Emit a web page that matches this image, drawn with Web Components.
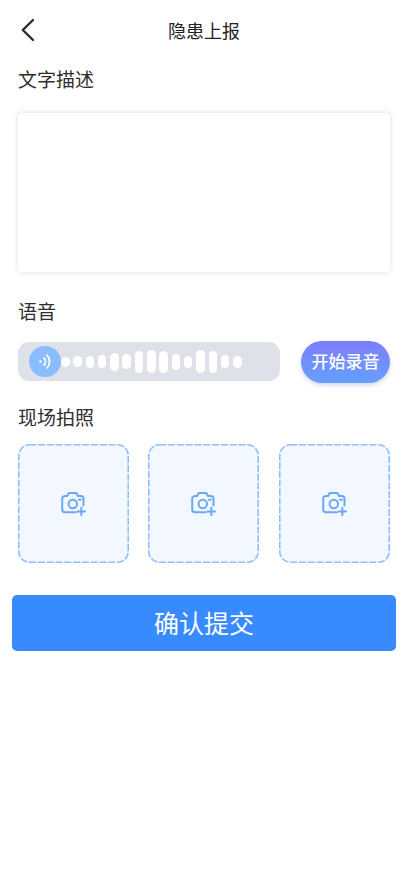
<!DOCTYPE html>
<html lang="zh"><head><meta charset="utf-8"><title>隐患上报</title>
<style>
html,body{margin:0;padding:0;background:#fff}
body{width:414px;height:896px;overflow:hidden;font-family:"Noto Sans CJK SC","Liberation Sans",sans-serif;color:#2b2b2b}
</style></head><body>
<report-page></report-page>
<script>
class TopBar extends HTMLElement{constructor(){super();this.attachShadow({mode:'open'}).innerHTML=`
<style>:host{display:flex;height:60px;box-sizing:border-box;padding:0 6px 1px 0;align-items:center;justify-content:center;position:relative;font-size:18px;color:#222}
svg{position:absolute;left:18px;top:15px}
</style><svg width="22" height="30" viewBox="0 0 22 30" fill="none" stroke="#2a2a2a" stroke-width="2.4" stroke-linecap="round" stroke-linejoin="round"><path d="M15 5 4.8 15 15 25"/></svg><span><slot></slot></span>`}}
class SecLabel extends HTMLElement{constructor(){super();this.attachShadow({mode:'open'}).innerHTML=`
<style>:host{display:block;font-size:19px;line-height:28px;color:#2e2e2e;padding-left:18px}</style><slot></slot>`}}
class TextBox extends HTMLElement{constructor(){super();this.attachShadow({mode:'open'}).innerHTML=`
<style>:host{display:block;margin:0 24px 0 18px;height:159px;background:#fff;border-radius:4px;box-shadow:0 0 6px rgba(0,0,0,.13)}</style>`}}
class VoiceBar extends HTMLElement{constructor(){super();const hs=[10,11,12,13,18,15,22,23,22,16,12,23,22,13,12];
this.attachShadow({mode:'open'}).innerHTML=`
<style>:host{display:flex;align-items:flex-start;margin:0 24px 0 18px;justify-content:space-between}
.track{width:262px;height:39px;margin-top:1px;border-radius:11px;background:#dee1e8;display:flex;align-items:center;padding-left:11px;box-sizing:border-box}
.knob{width:32px;height:31px;border-radius:50%;background:#8abdff;display:flex;align-items:center;justify-content:center;flex:none}
.bars{display:flex;align-items:center;gap:3.8px}
.bars i{display:block;width:8.5px;border-radius:5px;background:#fff}
button{all:unset;box-sizing:border-box;padding-bottom:3px;width:89px;height:42px;border-radius:21px;background:linear-gradient(180deg,#7e7dfd,#659ffe);color:#fff;font-size:17px;font-weight:500;display:flex;align-items:center;justify-content:center;box-shadow:0 2px 4px rgba(70,90,160,.25)}
</style>
<div class="track"><div class="knob"><svg width="16" height="17" viewBox="0 0 16 17" fill="none" stroke="#fff" stroke-width="1.8" stroke-linecap="round"><circle cx="3.4" cy="8.5" r="1.2" fill="#fff" stroke="none"/><path d="M7 5a5 5 0 0 1 0 7"/><path d="M10 2.2a9 9 0 0 1 0 12.6"/></svg></div>
<div class="bars">${hs.map(h=>`<i style="height:${h}px"></i>`).join('')}</div></div>
<button><slot></slot></button>`}}
class PhotoTile extends HTMLElement{constructor(){super();this.attachShadow({mode:'open'}).innerHTML=`
<style>:host{display:flex;position:relative;width:111px;height:119px;box-sizing:border-box;border-radius:11px;background:#f3f7ff;align-items:center;justify-content:center}
svg{display:block}
svg.edge{position:absolute;left:0;top:0}</style>
<svg class="edge" width="111" height="119" fill="none"><rect x=".8" y=".8" width="109.4" height="117.4" rx="10.5" stroke="#8fc0fa" stroke-width="1.6" stroke-dasharray="7 1.8"/></svg>
<svg width="26" height="24" viewBox="0 0 26 24" fill="none" stroke="#6aa8f7" stroke-width="2" stroke-linecap="round" stroke-linejoin="round">
<path d="M14.8 20.2H4A2.8 2.8 0 0 1 1.2 17.4V6.8A2.8 2.8 0 0 1 4 4H6.2L7.8 1h7.6L17 4h2.7A2.8 2.8 0 0 1 22.5 6.8V13.5"/>
<circle cx="11.8" cy="12" r="4.2"/><path d="M17.8 7.8h2"/><path d="M16.6 19.4h7.4M20.3 15.7v7.4"/></svg>`}}
class SubmitBtn extends HTMLElement{constructor(){super();this.attachShadow({mode:'open'}).innerHTML=`
<style>:host{display:flex;box-sizing:border-box;padding-bottom:2px;margin:0 18px 0 12px;height:56px;background:#388bff;border-radius:5px;color:#fff;font-size:25px;align-items:center;justify-content:center}</style><slot></slot>`}}
class ReportPage extends HTMLElement{constructor(){super();this.attachShadow({mode:'open'}).innerHTML=`
<style>:host{display:block;width:414px}
.l1{margin-top:5px;margin-bottom:20px}
.l2{margin-top:25px;margin-bottom:16px}
.l3{margin-top:20px;margin-bottom:13px}
.tiles{display:flex;margin:0 24px 0 18px}
.tiles photo-tile:nth-child(2){margin-left:19px}
.tiles photo-tile:nth-child(3){margin-left:20px}
submit-btn{margin-top:32px}
</style>
<top-bar>隐患上报</top-bar>
<sec-label class="l1">文字描述</sec-label>
<text-box></text-box>
<sec-label class="l2">语音</sec-label>
<voice-bar>开始录音</voice-bar>
<sec-label class="l3">现场拍照</sec-label>
<div class="tiles"><photo-tile></photo-tile><photo-tile></photo-tile><photo-tile></photo-tile></div>
<submit-btn>确认提交</submit-btn>`}}
customElements.define('top-bar',TopBar);customElements.define('sec-label',SecLabel);customElements.define('text-box',TextBox);customElements.define('voice-bar',VoiceBar);customElements.define('photo-tile',PhotoTile);customElements.define('submit-btn',SubmitBtn);customElements.define('report-page',ReportPage);
</script></body></html>
